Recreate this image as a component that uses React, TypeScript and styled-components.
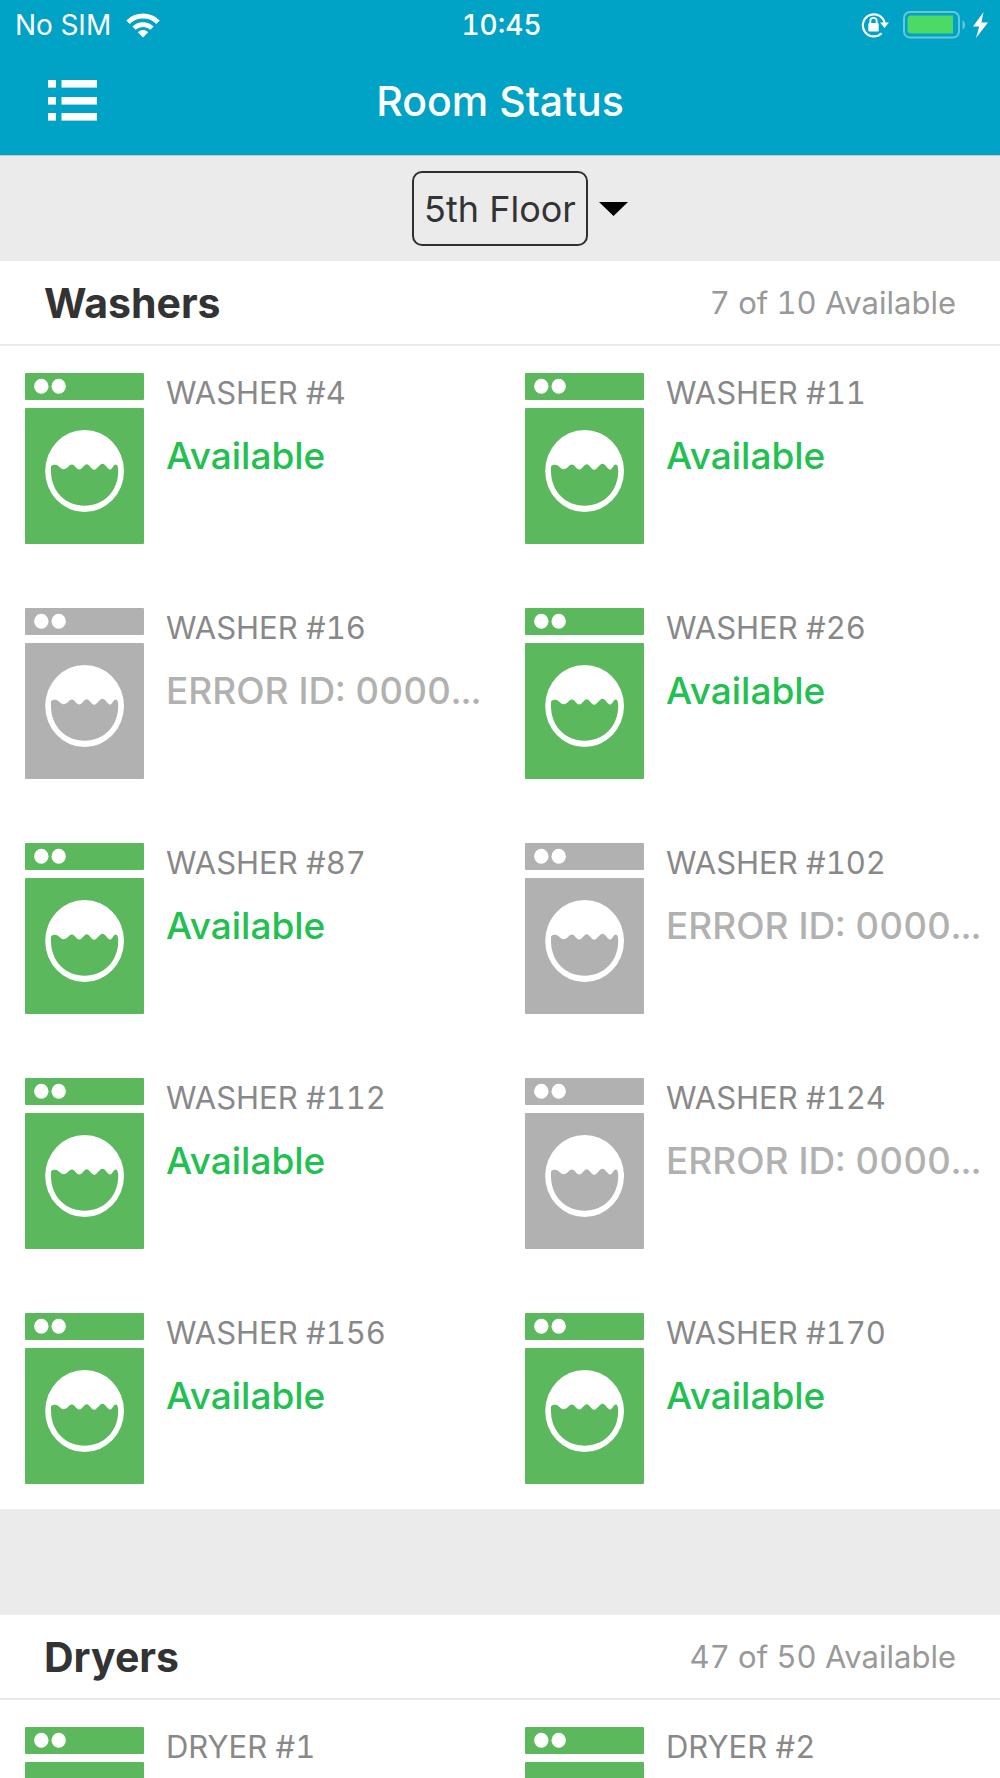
import React from "react";
import styled, { createGlobalStyle } from "styled-components";

const GlobalStyle = createGlobalStyle`
  *, *::before, *::after { box-sizing: border-box; }
  body {
    margin: 0;
    background: #fff;
    font-family: Inter, "Liberation Sans", sans-serif;
    font-variant-numeric: tabular-nums;
  }
  h1, h2, h3, p, ul { margin: 0; padding: 0; }
`;

const Screen = styled.div`
  display: flex;
  flex-direction: column;
  height: 100vh;
  overflow: hidden;
`;

const Header = styled.header`
  flex: none;
  background: #00a2c5;
  color: #fff;
  border-bottom: 1px solid #c8c8c8;
`;

const StatusBar = styled.div`
  display: grid;
  grid-template-columns: 1fr auto 1fr;
  align-items: center;
  height: 50px;
  padding: 0 12px 0 15px;
  font-size: 28px;
  line-height: 32px;
`;

const Carrier = styled.div`
  display: flex;
  align-items: center;
  gap: 15px;
  font-weight: 400;
`;

const Clock = styled.time`
  font-weight: 500;
`;

const Indicators = styled.div`
  display: flex;
  align-items: center;
  justify-content: flex-end;
  gap: 7px;

  svg:first-child { margin-right: 7px; }
`;

const NavBar = styled.div`
  display: grid;
  grid-template-columns: 1fr auto 1fr;
  align-items: center;
  height: 105px;
  padding: 0 48px 4px;
`;

const MenuButton = styled.button`
  justify-self: start;
  display: flex;
  padding: 0;
  border: 0;
  background: none;
  color: inherit;
  cursor: pointer;
`;

const Title = styled.h1`
  font-size: 41px;
  line-height: 50px;
  font-weight: 500;
`;

const Content = styled.main`
  flex: 1;
  min-height: 0;
  overflow-y: auto;
  scrollbar-width: none;
  background: #ebebeb;
`;

const FloorPicker = styled.label`
  display: grid;
  grid-template-columns: 1fr auto 1fr;
  align-items: center;
  column-gap: 11px;
  height: 105px;
`;

const FloorSelect = styled.select`
  grid-column: 2;
  appearance: none;
  height: 75px;
  padding: 0 10px;
  border: 2px solid #2f2f2f;
  border-radius: 10px;
  background: transparent;
  color: #333;
  font-family: inherit;
  font-size: 36px;
  font-weight: 400;
  text-align: center;
`;

const Section = styled.section`
  background: #fff;

  & + & { margin-top: 106px; }
`;

const SectionHeader = styled.div`
  display: flex;
  align-items: center;
  justify-content: space-between;
  height: 85px;
  padding: 0 44px;
  border-bottom: 2px solid #e9e9e9;
`;

const SectionTitle = styled.h2`
  color: #333;
  font-size: 41px;
  line-height: 50px;
  font-weight: 700;
`;

const Count = styled.p`
  color: #999;
  font-size: 31px;
  line-height: 40px;
  font-weight: 400;
`;

const MachineGrid = styled.ul`
  display: grid;
  grid-template-columns: 1fr 1fr;
  row-gap: 64px;
  padding: 27px 0 25px;
  list-style: none;
`;

const Machine = styled.li`
  display: flex;
  gap: 22px;
  min-width: 0;
  padding: 0 12px 0 25px;
`;

const MachineIcon = styled.svg<{ $ok: boolean }>`
  flex: none;
  width: 119px;
  height: 171px;
  color: ${(p) => (p.$ok ? "#5cb85c" : "#b1b1b1")};
`;

const MachineText = styled.div`
  display: flex;
  flex-direction: column;
  gap: 19px;
  min-width: 0;
`;

const MachineName = styled.h3`
  color: #888;
  font-size: 31px;
  line-height: 40px;
  font-weight: 400;
  white-space: nowrap;
`;

const MachineStatus = styled.p<{ $ok: boolean }>`
  color: ${(p) => (p.$ok ? "#22c050" : "#b1b1b1")};
  font-size: 37px;
  line-height: 48px;
  font-weight: 450;
  white-space: nowrap;
`;

type MachineInfo = { name: string; status?: string; failed?: boolean };

const available = (name: string): MachineInfo => ({ name, status: "Available" });
const failed = (name: string): MachineInfo => ({
  name,
  status: "ERROR ID: 0000...",
  failed: true,
});

const washers: MachineInfo[] = [
  available("WASHER #4"),
  available("WASHER #11"),
  failed("WASHER #16"),
  available("WASHER #26"),
  available("WASHER #87"),
  failed("WASHER #102"),
  available("WASHER #112"),
  failed("WASHER #124"),
  available("WASHER #156"),
  available("WASHER #170"),
];

const dryers: MachineInfo[] = [{ name: "DRYER #1" }, { name: "DRYER #2" }];

const WifiIcon = () => (
  <svg width="34" height="25" viewBox="0 0 34 25" aria-hidden="true">
    <g fill="none" stroke="#fff" strokeWidth="5">
      <path d="M2 9.2A21.3 21.3 0 0 1 32 9.2" />
      <path d="M8 15.2A13 13 0 0 1 26 15.2" strokeWidth="4.6" />
    </g>
    <path d="M17 24.6L11.8 19.2A7.4 7.4 0 0 1 22.2 19.2Z" fill="#fff" />
  </svg>
);

const RotationLockIcon = () => (
  <svg width="28" height="26" viewBox="0 0 28 26" aria-hidden="true">
    <path
      d="M20.6 21.2A11 11 0 1 1 23.6 11"
      fill="none"
      stroke="#fff"
      strokeWidth="2.2"
    />
    <path d="M19 10.6H28L23.5 16Z" fill="#fff" />
    <rect x="7.3" y="11" width="10.4" height="8.6" rx="1" fill="#fff" />
    <path d="M9.3 11.5V9a3.2 3.2 0 0 1 6.4 0v2.5" fill="none" stroke="#fff" strokeWidth="1.8" />
  </svg>
);

const BatteryIcon = () => (
  <svg width="63" height="28" viewBox="0 0 63 28" aria-hidden="true">
    <rect x="1" y="1" width="55" height="25.6" rx="6" fill="none" stroke="#66c7dc" strokeWidth="2" />
    <path d="M59.5 9.5c3.6 1.6 3.6 7.4 0 9Z" fill="#66c7dc" />
    <path d="M8 4.5H50V22.5H8a3.5 3.5 0 0 1-3.5-3.5V8A3.5 3.5 0 0 1 8 4.5Z" fill="#4cd964" />
  </svg>
);

const BoltIcon = () => (
  <svg width="15" height="26" viewBox="0 0 15 26" aria-hidden="true">
    <path d="M10.6 0L0 14.4H6.2L3 26L15 10.6H8.4Z" fill="#fff" />
  </svg>
);

const ListIcon = () => (
  <svg width="50" height="41" viewBox="0 0 50 41" fill="#fff" aria-hidden="true">
    {[0, 17, 33].map((y) => (
      <g key={y}>
        <rect x="0" y={y} width="8" height="7.6" />
        <rect x="13.5" y={y} width="35.5" height="7.6" />
      </g>
    ))}
  </svg>
);

const CaretIcon = () => (
  <svg width="29" height="14" viewBox="0 0 29 14" aria-hidden="true">
    <path d="M0 0H29L14.5 14Z" fill="#000" />
  </svg>
);

const WasherDrawing = ({ ok }: { ok: boolean }) => (
  <MachineIcon $ok={ok} viewBox="0 0 119 171" aria-hidden="true">
    <rect width="119" height="27" rx="1" fill="currentColor" />
    <ellipse cx="16.3" cy="13.3" rx="7.2" ry="7.5" fill="#fff" />
    <ellipse cx="33.7" cy="13.3" rx="7.2" ry="7.5" fill="#fff" />
    <rect y="35" width="119" height="136" rx="1" fill="currentColor" />
    <ellipse cx="59.6" cy="98" rx="39.4" ry="41" fill="#fff" />
    <path
      d="M26 93.5C27 91.8 31 91.2 33 92.8C36 95.2 37.5 97.2 40.5 95.8C43 94.6 44.5 91.4 47 91.5C49.5 91.6 51.5 96.5 54.3 96.5C57 96.5 59.3 91.3 61.7 91.3C64.2 91.3 66.5 96.8 69.3 96.8C72 96.8 74.5 90.8 77.5 90.8C80.5 90.8 82.5 96.5 85 96.5C87.3 96.5 88.5 91.4 90.8 91.4C92.3 91.4 93.2 93.5 93.2 98C93.2 118.5 78.5 132.7 59.6 132.7C40.7 132.7 26 118.5 26 98Z"
      fill="currentColor"
    />
  </MachineIcon>
);

type MachineSectionProps = { title: string; count: string; machines: MachineInfo[] };

const MachineSection = ({ title, count, machines }: MachineSectionProps) => (
  <Section>
    <SectionHeader>
      <SectionTitle>{title}</SectionTitle>
      <Count>{count}</Count>
    </SectionHeader>
    <MachineGrid>
      {machines.map((machine) => (
        <Machine key={machine.name}>
          <WasherDrawing ok={!machine.failed} />
          <MachineText>
            <MachineName>{machine.name}</MachineName>
            {machine.status && (
              <MachineStatus $ok={!machine.failed}>{machine.status}</MachineStatus>
            )}
          </MachineText>
        </Machine>
      ))}
    </MachineGrid>
  </Section>
);

export default function App() {
  return (
    <>
      <GlobalStyle />
      <Screen>
        <Header>
          <StatusBar>
            <Carrier>
              <span>No SIM</span>
              <WifiIcon />
            </Carrier>
            <Clock>10:45</Clock>
            <Indicators>
              <RotationLockIcon />
              <BatteryIcon />
              <BoltIcon />
            </Indicators>
          </StatusBar>
          <NavBar>
            <MenuButton type="button" aria-label="Menu">
              <ListIcon />
            </MenuButton>
            <Title>Room Status</Title>
          </NavBar>
        </Header>
        <Content>
          <FloorPicker>
            <FloorSelect aria-label="Floor" defaultValue="5">
              <option value="5">5th Floor</option>
            </FloorSelect>
            <CaretIcon />
          </FloorPicker>
          <MachineSection title="Washers" count="7 of 10 Available" machines={washers} />
          <MachineSection title="Dryers" count="47 of 50 Available" machines={dryers} />
        </Content>
      </Screen>
    </>
  );
}
